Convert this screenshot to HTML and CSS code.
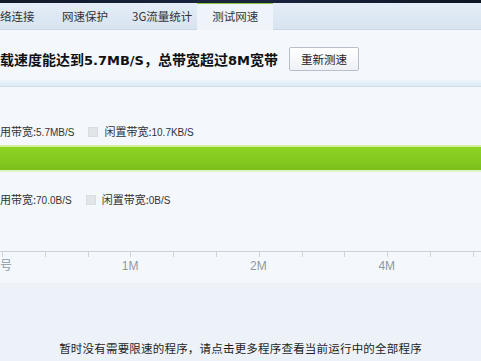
FILE: index.html
```html
<!DOCTYPE html>
<html lang="zh-CN">
<head>
<meta charset="utf-8">
<link rel="stylesheet" href="styles.css">
</head>
<body>
<div class="app">
  <div class="topstrip"></div>
  <nav class="tabs">
    <div class="tab first">络连接</div>
    <div class="tab second">网速保护</div>
    <div class="tab">3G流量统计</div>
    <div class="tab active">测试网速</div>
  </nav>
  <section class="panel">
    <div class="head">
      <h1 class="headline">载速度能达到<span class="num">5.7MB/S</span>，总带宽超过<span class="num">8M</span>宽带</h1>
      <button class="btn">重新测速</button>
    </div>
    <div class="band"></div>
    <div class="legend first">
      <span class="item used">用带宽:<span class="val">5.7MB/S</span></span>
      <span class="swatch"></span>
      <span class="item">闲置带宽:<span class="val">10.7KB/S</span></span>
    </div>
    <div class="bar"></div>
    <div class="legend second">
      <span class="item used">用带宽:<span class="val">70.0B/S</span></span>
      <span class="swatch"></span>
      <span class="item">闲置带宽:<span class="val">0B/S</span></span>
    </div>
    <div class="axis"></div>
    <div class="labels">
      <span class="lbl lead">号</span>
      <span class="lbl">1M</span>
      <span class="lbl">2M</span>
      <span class="lbl">4M</span>
    </div>
  </section>
  <footer class="foot">暂时没有需要限速的程序，请点击更多程序查看当前运行中的全部程序</footer>
</div>
</body>
</html>
```
FILE: styles.css
```css
html, body {
  margin: 0;
  padding: 0;
  width: 481px;
  height: 361px;
  overflow: hidden;
  background: #edf2f9;
  font-family: "Noto Sans CJK SC", "Noto Sans", sans-serif;
}
.app {
  width: 481px;
  height: 361px;
  overflow: hidden;
  display: flex;
  flex-direction: column;
}
.topstrip {
  height: 3px;
  background: linear-gradient(to right, #101a2a, #1a2540 50%, #0e1624);
}
.tabs {
  height: 26px;
  display: flex;
  align-items: stretch;
  background: linear-gradient(#e4edf7, #d8e4f1);
  border-bottom: 1px solid #cad8e6;
}
.tab {
  padding: 0 12px;
  font-size: 11.5px;
  line-height: 26px;
  color: #333;
  white-space: nowrap;
}
.tab.first { padding-left: 0; }
.tab.second { margin-left: 3.5px; }
.tab.active {
  padding: 0 15px;
  margin-left: -7px;
  background: #eef4fa;
  border-top: 1px solid #8dc63f;
  line-height: 25px;
  margin-bottom: -1px;
}
.panel {
  background: #f4f8fc;
  height: 253px;
  display: flex;
  flex-direction: column;
}
.head {
  height: 42px;
  padding-top: 8px;
  display: flex;
  align-items: center;
}
.headline {
  margin: 0;
  font-size: 14px;
  font-weight: bold;
  color: #111;
  white-space: nowrap;
}
.num {
  font-family: "DejaVu Sans", sans-serif;
  font-size: 13px;
  font-weight: bold;
}
.btn {
  margin-left: 11px;
  width: 70px;
  height: 24px;
  padding: 0;
  border: 1px solid #b7bfca;
  border-radius: 2px;
  background: linear-gradient(#ffffff, #eef1f5);
  font-family: "Noto Sans CJK SC", sans-serif;
  font-size: 11.5px;
  color: #222;
}
.band {
  height: 6px;
  background: linear-gradient(#edf4fa, #dde9f4);
  border-bottom: 1px solid #cfdde8;
}
.legend {
  height: 14px;
  line-height: 14px;
  display: flex;
  align-items: center;
  font-size: 11px;
  color: #333;
  white-space: nowrap;
}
.legend.first { margin-top: 38px; }
.legend.second { margin-top: 21px; }
.val {
  font-family: "Liberation Sans", sans-serif;
  font-size: 10px;
}
.swatch {
  width: 10px;
  height: 10px;
  background: #e2e5e8;
  border: 1px solid #d9dce0;
  box-sizing: border-box;
  margin: 0 6px 0 14px;
}
.bar {
  margin-top: 6px;
  height: 23px;
  background: linear-gradient(#8fd324, #84cb1f 50%, #7cbf1c);
  border-top: 2px solid #d4ef9e;
  border-bottom: 2px solid #e2f4c4;
}
.axis {
  margin-top: 44px;
  height: 5px;
  border-top: 1px solid #c9d2da;
  background: repeating-linear-gradient(to right, #cdd5dc 0 1px, transparent 1px 42.8px);
  background-position: 2px 0;
}
.labels {
  display: flex;
  margin-top: 2px;
  height: 14px;
}
.lbl {
  width: 128.3px;
  flex: none;
  text-align: center;
  font-family: "Liberation Sans", "Noto Sans CJK SC", sans-serif;
  font-size: 12px;
  line-height: 14px;
  color: #9099a2;
}
.lbl.lead {
  width: 66px;
  text-align: left;
}
.foot {
  margin-top: 58px;
  text-align: center;
  font-size: 11.5px;
  letter-spacing: 0.2px;
  line-height: 14px;
  color: #1e1e1e;
  white-space: nowrap;
}
```
